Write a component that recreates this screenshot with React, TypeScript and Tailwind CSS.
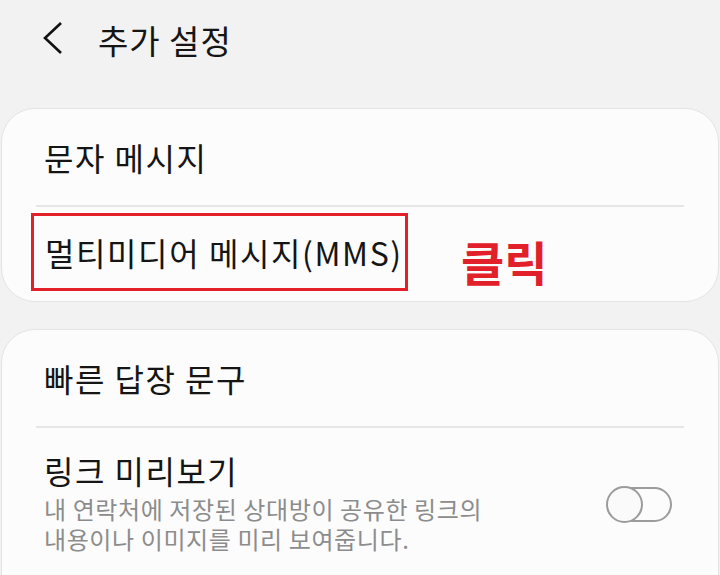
const font = { fontFamily: '"Noto Sans CJK KR", "Noto Sans", sans-serif' };

export default function App() {
  return (
    <div
      className="w-[720px] h-[575px] overflow-hidden bg-[#f2f2f2] text-[#151515]"
      style={font}
    >
      {/* Header */}
      <div className="h-[108px] flex items-start pt-[17px] pl-[42px]">
        <svg width="22" height="34" viewBox="0 0 22 34" className="mt-[4px]">
          <polyline points="19,2 3,17 19,32" fill="none" stroke="#111" strokeWidth="2.6" />
        </svg>
        <h1 className="ml-[34px] text-[33px] leading-[46px] font-normal tracking-[1px]">추가 설정</h1>
      </div>

      {/* Card 1 */}
      <div className="mx-px rounded-[34px] bg-[#fcfcfc] border border-[#e4e4e4]">
        <div className="h-[96px] flex items-center pl-[42px] text-[32px] tracking-[1.5px]">문자 메시지</div>
        <div className="mx-[34px] h-[2px] bg-[#e6e6e6]" />
        <div className="h-[94px] flex items-center pl-[29px]">
          <div className="border-[3px] border-[#e2202a] h-[78px] w-[377px] flex items-center pl-[11px] mt-[-4px] text-[32px] tracking-[1.6px] whitespace-nowrap">
            멀티미디어 메시지(MMS)
          </div>
          <span className="ml-[53px] mt-[14px] text-[47px] leading-[56px] font-bold text-[#e2202a]">클릭</span>
        </div>
      </div>

      {/* Card 2 */}
      <div className="mx-px mt-[27px] rounded-t-[34px] bg-[#fcfcfc] border border-[#e4e4e4] h-[260px]">
        <div className="h-[96px] flex items-center pl-[42px] text-[32px] tracking-[1.5px]">빠른 답장 문구</div>
        <div className="mx-[34px] h-[2px] bg-[#e6e6e6]" />
        <div className="flex items-start pl-[42px] pr-[46px] pt-[21px]">
          <div className="flex-1">
            <div className="text-[32px] leading-[42px] tracking-[1.5px]">링크 미리보기</div>
            <div className="mt-[3px] text-[24px] leading-[30px] tracking-[0.6px] text-[#8c8c8c] whitespace-nowrap">
              <p>내 연락처에 저장된 상대방이 공유한 링크의</p>
              <p>내용이나 이미지를 미리 보여줍니다.</p>
            </div>
          </div>
          <div className="relative mt-[37px] w-[66px] h-[37px]">
            <div className="absolute left-[8px] right-0 top-[1px] h-[35px] rounded-full border-2 border-[#9c9c9c]" />
            <div className="absolute left-0 top-0 w-[37px] h-[37px] rounded-full border-2 border-[#9c9c9c] bg-[#fafafa]" />
          </div>
        </div>
      </div>
    </div>
  );
}
